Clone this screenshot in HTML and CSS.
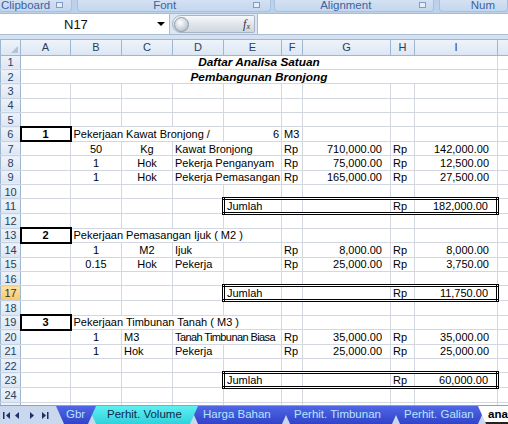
FILE: index.html
```html
<!DOCTYPE html>
<html>
<head>
<meta charset="utf-8">
<link rel="stylesheet" href="styles.css">
</head>
<body>
<div class="app">
  <div class="ribbon">
    <div class="grp g-clip"><span class="glabel">Clipboard</span><i class="launch"></i></div>
    <div class="grp g-font"><span class="glabel">Font</span><i class="launch"></i></div>
    <div class="grp g-align"><span class="glabel">Alignment</span><i class="launch"></i></div>
    <div class="grp g-num"><span class="glabel">Num</span></div>
  </div>
  <div class="fbar">
    <div class="namebox"><span class="nbtext">N17</span><span class="nbarrow"></span></div>
    <div class="fxbtn"><span class="knob"></span><span class="fx">f<sub>x</sub></span></div>
    <div class="finput"></div>
  </div>
  <div class="strip"></div>
  <div class="sheet">
    <table class="grid">
      <colgroup>
        <col class="c-hd"><col class="c-a"><col class="c-b"><col class="c-c"><col class="c-d"><col class="c-e"><col class="c-f"><col class="c-g"><col class="c-h"><col class="c-i"><col class="c-j">
      </colgroup>
      <thead>
        <tr class="hrow">
          <th class="corner"><span class="tri"></span></th><th>A</th><th>B</th><th>C</th><th>D</th><th>E</th><th>F</th><th>G</th><th>H</th><th>I</th><th></th>
        </tr>
      </thead>
      <tbody>
        <tr><th>1</th><td colspan="9" class="title">Daftar Analisa Satuan</td><td></td></tr>
        <tr><th>2</th><td colspan="9" class="title">Pembangunan Bronjong</td><td></td></tr>
        <tr><th>3</th><td></td><td></td><td></td><td></td><td></td><td></td><td></td><td></td><td></td><td></td></tr>
        <tr><th>4</th><td></td><td></td><td></td><td></td><td></td><td></td><td></td><td></td><td></td><td></td></tr>
        <tr><th>5</th><td></td><td></td><td></td><td></td><td></td><td></td><td></td><td></td><td></td><td></td></tr>
        <tr><th>6</th><td class="num-box">1</td><td colspan="3">Pekerjaan Kawat Bronjong /</td><td class="r">6</td><td>M3</td><td></td><td></td><td></td><td></td></tr>
        <tr><th>7</th><td></td><td class="c">50</td><td class="c">Kg</td><td colspan="2">Kawat Bronjong</td><td>Rp</td><td class="acc">710,000.00</td><td>Rp</td><td class="acc">142,000.00</td><td></td></tr>
        <tr><th>8</th><td></td><td class="c">1</td><td class="c">Hok</td><td colspan="2"><span class="cliptxt">Pekerja Penganyam</span></td><td>Rp</td><td class="acc">75,000.00</td><td>Rp</td><td class="acc">12,500.00</td><td></td></tr>
        <tr><th>9</th><td></td><td class="c">1</td><td class="c">Hok</td><td colspan="2"><span class="cliptxt">Pekerja Pemasangan</span></td><td>Rp</td><td class="acc">165,000.00</td><td>Rp</td><td class="acc">27,500.00</td><td></td></tr>
        <tr><th>10</th><td></td><td></td><td></td><td></td><td></td><td></td><td></td><td></td><td></td><td></td></tr>
        <tr><th>11</th><td></td><td></td><td></td><td></td><td class="tot tot-l">Jumlah</td><td class="tot"></td><td class="tot"></td><td class="tot">Rp</td><td class="tot tot-r acc">182,000.00</td><td></td></tr>
        <tr><th>12</th><td></td><td></td><td></td><td></td><td></td><td></td><td></td><td></td><td></td><td></td></tr>
        <tr><th>13</th><td class="num-box">2</td><td colspan="4">Pekerjaan Pemasangan Ijuk ( M2 )</td><td></td><td></td><td></td><td></td><td></td></tr>
        <tr><th>14</th><td></td><td class="c">1</td><td class="c">M2</td><td>Ijuk</td><td></td><td>Rp</td><td class="acc">8,000.00</td><td>Rp</td><td class="acc">8,000.00</td><td></td></tr>
        <tr><th>15</th><td></td><td class="c">0.15</td><td class="c">Hok</td><td>Pekerja</td><td></td><td>Rp</td><td class="acc">25,000.00</td><td>Rp</td><td class="acc">3,750.00</td><td></td></tr>
        <tr><th>16</th><td></td><td></td><td></td><td></td><td></td><td></td><td></td><td></td><td></td><td></td></tr>
        <tr><th class="sel">17</th><td></td><td></td><td></td><td></td><td class="tot tot-l">Jumlah</td><td class="tot"></td><td class="tot"></td><td class="tot">Rp</td><td class="tot tot-r acc">11,750.00</td><td></td></tr>
        <tr><th>18</th><td></td><td></td><td></td><td></td><td></td><td></td><td></td><td></td><td></td><td></td></tr>
        <tr><th>19</th><td class="num-box">3</td><td colspan="4">Pekerjaan Timbunan Tanah ( M3 )</td><td></td><td></td><td></td><td></td><td></td></tr>
        <tr><th>20</th><td></td><td class="c">1</td><td>M3</td><td colspan="2"><span class="cliptxt tight">Tanah Timbunan Biasa</span></td><td>Rp</td><td class="acc">35,000.00</td><td>Rp</td><td class="acc">35,000.00</td><td></td></tr>
        <tr><th>21</th><td></td><td class="c">1</td><td>Hok</td><td>Pekerja</td><td></td><td>Rp</td><td class="acc">25,000.00</td><td>Rp</td><td class="acc">25,000.00</td><td></td></tr>
        <tr><th>22</th><td></td><td></td><td></td><td></td><td></td><td></td><td></td><td></td><td></td><td></td></tr>
        <tr><th>23</th><td></td><td></td><td></td><td></td><td class="tot tot-l">Jumlah</td><td class="tot"></td><td class="tot"></td><td class="tot">Rp</td><td class="tot tot-r acc">60,000.00</td><td></td></tr>
        <tr><th>24</th><td></td><td></td><td></td><td></td><td></td><td></td><td></td><td></td><td></td><td></td></tr>
        <tr class="last"><th>25</th><td></td><td></td><td></td><td></td><td></td><td></td><td></td><td></td><td></td><td></td></tr>
      </tbody>
    </table>
  </div>
  <div class="tabbar">
    <div class="nav">
      <svg width="54" height="18" viewBox="0 0 54 18">
        <g fill="#1e2f6e">
          <rect x="3" y="6" width="1.5" height="7"/>
          <path d="M10 6 L6 9.5 L10 13 Z"/>
          <path d="M19 6 L15 9.5 L19 13 Z"/>
          <path d="M30 6 L34 9.5 L30 13 Z"/>
          <path d="M42 6 L46 9.5 L42 13 Z"/>
          <rect x="47" y="6" width="1.5" height="7"/>
        </g>
      </svg>
    </div>
    <div class="tabs">
      <div class="tab t-blue t-gbr">Gbr</div>
      <div class="tab t-cyan t-vol">Perhit. Volume</div>
      <div class="tab t-blue t-harga">Harga Bahan</div>
      <div class="tab t-blue t-timb">Perhit. Timbunan</div>
      <div class="tab t-blue t-gal">Perhit. Galian</div>
      <div class="tab t-active">ana</div>
    </div>
  </div>
</div>
</body>
</html>
```
FILE: styles.css
```css
* { box-sizing: border-box; margin: 0; padding: 0; }
html, body { width: 508px; height: 424px; overflow: hidden; background: #fff; }
body { font-family: "Liberation Sans", Arial, sans-serif; }

.app { display: flex; flex-direction: column; height: 424px; }

/* ribbon group labels */
.ribbon {
  height: 13px; flex: none; display: flex; overflow: hidden;
  background: #bcd1ea;
}
.grp {
  display: flex; align-items: flex-start; justify-content: center;
  height: 12px; background: linear-gradient(#d3e1f2, #c4d7ee);
  border: 1px solid #a9c1e0; border-top: none;
  border-radius: 0 0 4px 4px; position: relative;
}
.glabel {
  font-size: 11.5px; line-height: 12px; color: #3b63a0; margin-top: -1px;
}
.g-clip { width: 74px; justify-content: flex-start; padding-left: 1px; margin-left: -1px; }
.g-clip .glabel { margin-right: 6px; }
.g-font { width: 198px; margin-left: 5px; padding-right: 18px; }
.g-align { width: 163px; margin-left: 3px; padding-right: 16px; }
.g-num { width: 70px; margin-left: 5px; justify-content: flex-start; padding-left: 31px; }
.launch {
  display: block; width: 7px; height: 6px; margin-top: 2px;
  border: 1px solid #7d9cc6; background: #e4edf8;
}
.g-font .launch { position: absolute; right: 10px; top: 0; }
.g-align .launch { position: absolute; right: 7px; top: 0; }

/* formula bar */
.fbar {
  height: 22px; flex: none; display: flex;
  background: #dde7f4; border-bottom: 1px solid #a8bcd8; border-top: 1px solid #a8bcd8;
}
.namebox {
  width: 170px; background: #fff; display: flex; align-items: center;
  border-right: 1px solid #a8bcd8;
}
.nbtext { font-size: 13px; color: #111; margin-left: 64px; }
.nbarrow {
  margin-left: auto; margin-right: 4px;
  border-left: 4px solid transparent; border-right: 4px solid transparent;
  border-top: 4px solid #000;
}
.fxbtn {
  width: 83px; margin: 1px 0 1px 2px; display: flex; align-items: center;
  background: linear-gradient(#f7f9fc, #dfe4ea 55%, #cfd6de);
  border: 1px solid #a9b4c2; border-radius: 10px 2px 2px 10px;
}
.knob {
  width: 15px; height: 15px; border-radius: 50%; margin-left: 1px;
  background: radial-gradient(circle at 40% 35%, #ffffff, #c9d0d9 60%, #9ea9b6);
  border: 1px solid #8f9caa;
}
.fx {
  margin-left: auto; margin-right: 4px; font-family: "Liberation Serif", serif;
  font-style: italic; font-size: 12px; color: #333;
}
.fx sub { font-size: 8px; vertical-align: -1px; }
.finput { flex: 1; background: #fff; border-left: 1px solid #a8bcd8; margin-left: 2px; }

.strip { height: 5px; flex: none; background: #d5e1f1; border-bottom: 1px solid #9eb6ce; }

/* sheet grid */
.sheet { flex: 1; overflow: hidden; background: #fff; }
.grid {
  table-layout: fixed; border-collapse: collapse; width: 509px;
  font-size: 11px; color: #000;
}
.c-hd { width: 20px; } .c-a { width: 50px; } .c-b { width: 51px; } .c-c { width: 51px; }
.c-d { width: 51px; } .c-e { width: 58px; } .c-f { width: 21px; } .c-g { width: 88px; }
.c-h { width: 24px; } .c-i { width: 83px; } .c-j { width: 12px; }

.grid tr { height: 14.4px; }
.grid .hrow { height: 15px; }
.grid th {
  font-weight: normal; font-size: 11px; color: #27415f; text-align: center;
  background: linear-gradient(#eef3fa, #dce6f3);
  border: 1px solid #9eb6ce; padding: 0; line-height: 12px;
}
.grid tbody th { border-top-color: #c5d3e4; border-bottom-color: #c5d3e4; }
.grid thead th { border-top: none; }
.grid tr.last th { vertical-align: top; }
.grid th.corner { position: relative; }
.tri {
  position: absolute; right: 2px; bottom: 2px; width: 0; height: 0;
  border-left: 7px solid transparent; border-bottom: 7px solid #b4c4d8;
}
.grid th.sel { background: linear-gradient(#fbe3a8, #f6c76a); color: #3a3020; }

.grid td {
  border: 1px solid #d3d8e0; padding: 0 2px 0 2px; line-height: 12px;
  white-space: nowrap; overflow: visible;
}
.title { text-align: center; font-weight: bold; font-style: italic; font-size: 11.8px; }
.c { text-align: center; }
.r { text-align: right; }
.acc { text-align: right; padding-right: 8px !important; }
.cliptxt { display: block; width: 107px; overflow: hidden; text-overflow: clip; white-space: nowrap; }
.tight { letter-spacing: -0.6px; }
.num-box { border: 2px solid #000 !important; text-align: center; font-weight: bold; }
.tot { border-top: 3px double #000 !important; border-bottom: 3px double #000 !important; }
.tot-l { border-left: 3px double #000 !important; }
.tot-r { border-right: 3px double #000 !important; }

/* sheet tabs */
.tabbar {
  height: 19px; flex: none; display: flex; background: #c9d8ec;
  border-top: 1px solid #8aa2c4;
}
.nav { width: 56px; flex: none; }
.tabs { display: flex; flex: 1; overflow: hidden; }
.tab {
  flex: none; height: 18px; line-height: 16px; font-size: 11.5px; white-space: nowrap;
  margin-right: -8px; position: relative;
  clip-path: polygon(0 0, 100% 0, calc(100% - 8px) 100%, 8px 100%);
}
.t-blue { background: linear-gradient(#4f66e6, #3243c8); color: #b5e6ff; }
.t-cyan { background: linear-gradient(#5ff0f0, #2fd2dc); color: #10284e; }
.t-gbr { width: 40px; z-index: 6; padding-left: 10px; }
.t-vol { width: 110px; z-index: 5; padding-left: 19px; }
.t-harga { width: 100px; z-index: 4; padding-left: 13px; }
.t-timb { width: 118px; z-index: 3; padding-left: 12px; }
.t-gal { width: 94px; z-index: 2; padding-left: 12px; }
.t-active {
  background: #fff; color: #000; font-weight: bold; z-index: 7; padding-left: 10px; width: 40px;
  border-bottom: 2px solid #222;
}
```
